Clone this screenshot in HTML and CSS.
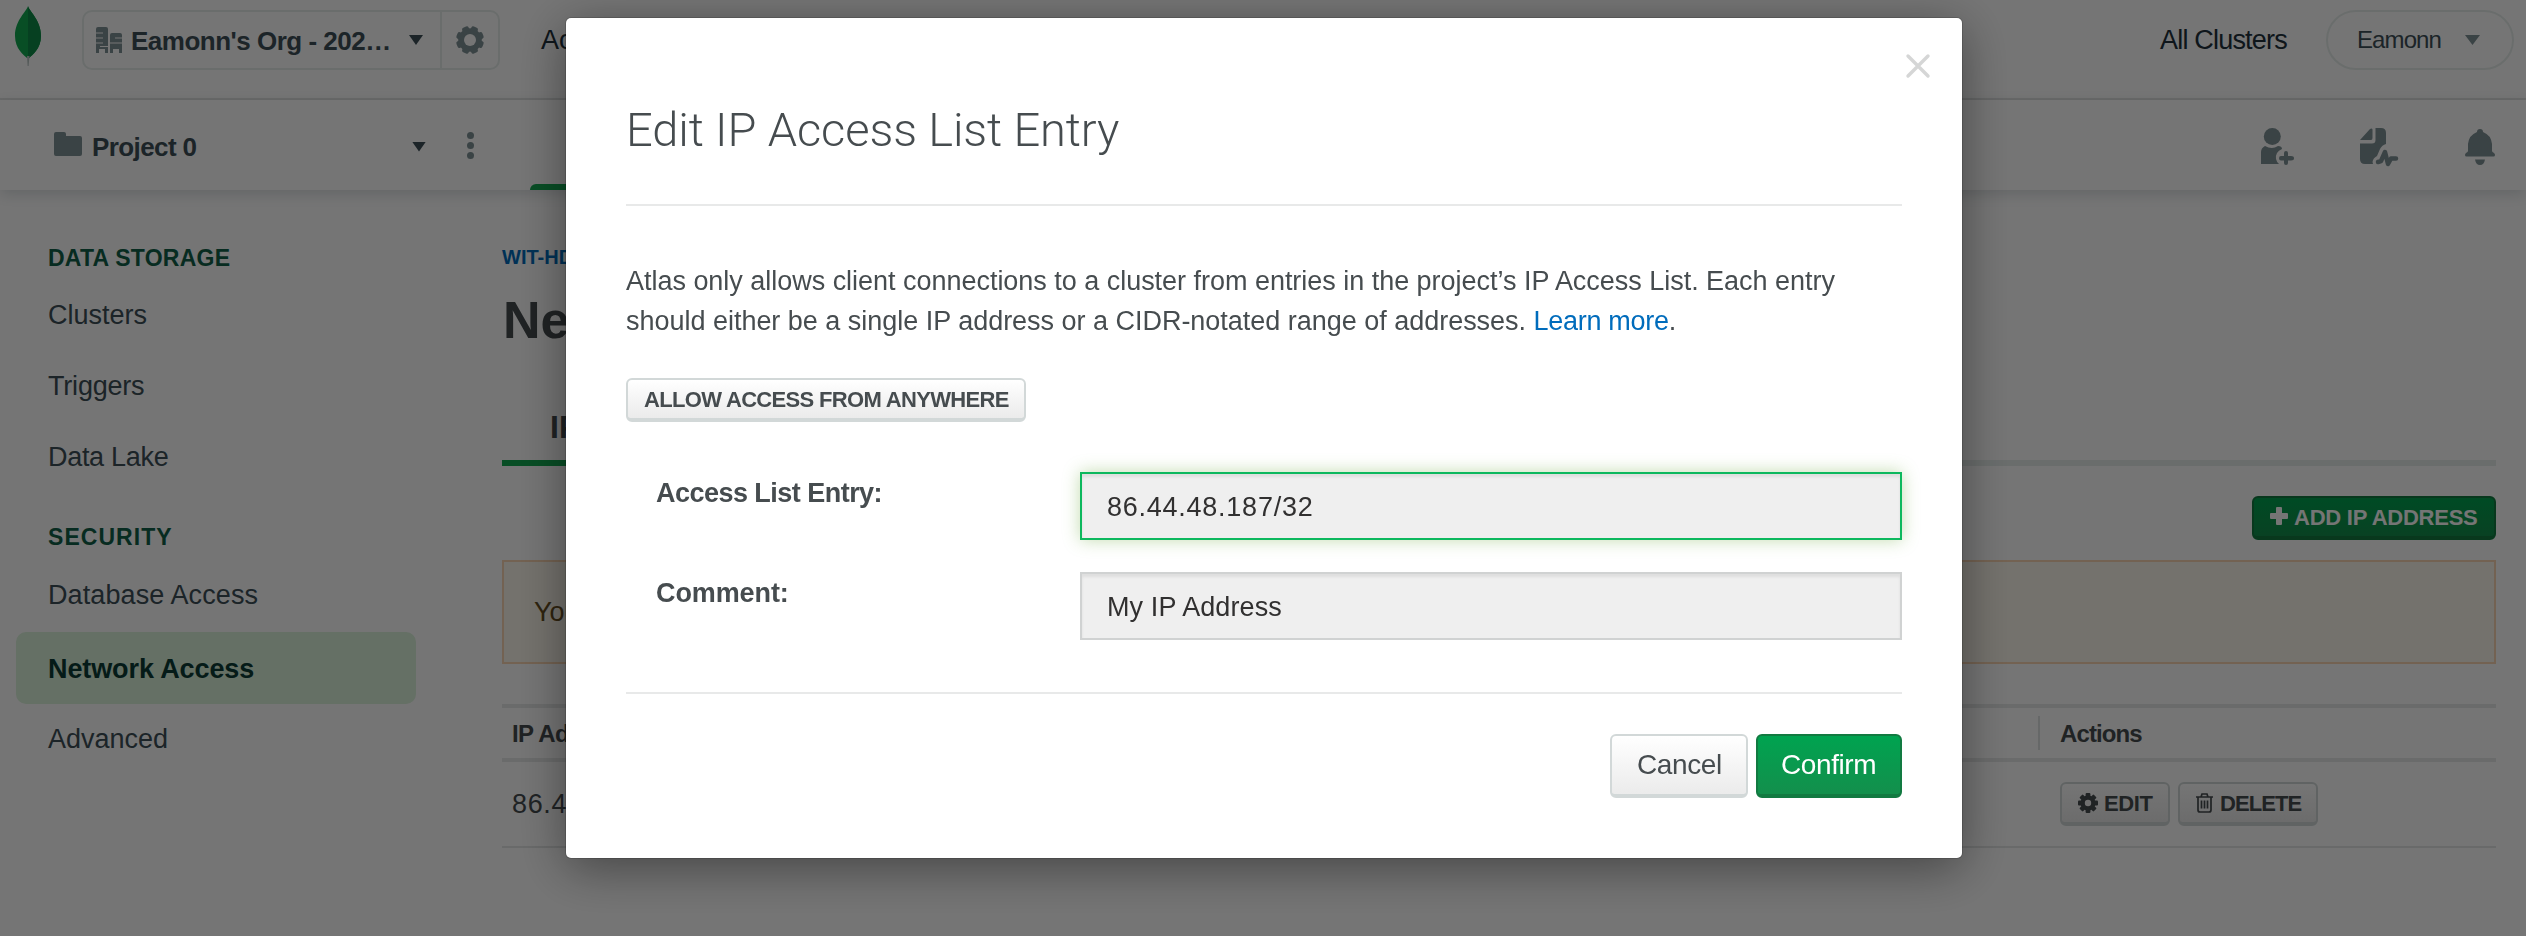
FILE: index.html
```html
<!DOCTYPE html>
<html lang="en">
<head>
<meta charset="utf-8">
<title>Network Access</title>
<link rel="stylesheet" href="styles.css">
</head>
<body>
<div class="page">
  <header class="topbar">
    <svg class="leaf" viewBox="0 0 26 60"><path fill="#13aa52" d="M13 0C14 5 26 14 26 30C26 43 17 49 14 52H12C9 49 0 43 0 30C0 14 12 5 13 0Z"/><path fill="#0f8c48" d="M13 0C14 5 26 14 26 30C26 43 17 49 14 52H13Z"/><path fill="#b8c4c2" d="M12 50H14.5L13.6 60H12.6Z"/></svg>
    <div class="org">
      <div class="org-name">
        <svg class="org-icon" viewBox="0 0 26 26"><path fill="#7f9296" d="M2 0H10Q12 0 12 2V26H9V22H3V26H0V2Q0 0 2 0ZM16 6H24Q26 6 26 8V26H23V22H17V26H14V8Q14 6 16 6Z"/><path stroke="#fff" stroke-width="1.1" d="M0 6H7M0 11H7M0 16H7M19 11H26M14 16H21M19 16H26M4 19.500H12"/></svg>
        <span class="org-text">Eamonn's Org - 202…</span>
        <i class="caret"></i>
      </div>
      <div class="org-gear">
        <svg viewBox="-14 -14 28 28"><g fill="#7f9296"><circle r="11.8"/><g id="teeth"><rect x="-3.500" y="-14" width="7" height="28" rx="2" transform="rotate(22.500)"/><rect x="-14" y="-3.500" width="28" height="7" rx="2" transform="rotate(22.500)"/></g><use href="#teeth" transform="rotate(45)"/></g><circle r="6" fill="#fff"/></svg>
      </div>
    </div>
    <span class="nav-link nav-access">Access</span>
    <span class="nav-link nav-clusters">All Clusters</span>
    <div class="user"><span>Eamonn</span><i class="caret caret-user"></i></div>
  </header>
  <div class="subbar">
    <svg class="folder" viewBox="0 0 28 24"><path fill="#7f9296" d="M2 0H10Q12 0 12 2V4H26Q28 4 28 6V22Q28 24 26 24H2Q0 24 0 22V2Q0 0 2 0Z"/></svg>
    <span class="project">Project 0</span>
    <i class="caret caret-project"></i>
    <div class="dots"><i></i><i></i><i></i></div>
    <div class="tab-active"></div>
    <div class="tools">
      <svg class="t-person" viewBox="0 0 33 37"><g fill="#7f9296"><ellipse cx="11.3" cy="8.5" rx="8.5" ry="8.5"/><path d="M4 18Q11 22 17 18Q21 18 21 21Q14 24 15 31Q16 35 18 36H0V24Q0 20 4 18Z"/><path d="M25 23Q27 23 27 25V28H30Q33 28 33 30.300Q33 32.500 30 32.500H27V35Q27 37 25 37Q23 37 23 35V32.500H20Q18 32.500 18 30.300Q18 28 20 28H23V25Q23 23 25 23Z"/></g></svg>
      <svg class="t-doc" viewBox="0 0 38 38"><g fill="#7f9296"><path d="M0 12L10 1Q12 0 12.500 1.500V10Q12.500 12 11 12ZM15.500 0H21Q26 0 26 5V16Q22 17 20 21L17 28Q13 30 12.500 34L13 36H5Q0 36 0 31V15.500H12Q15.500 15.500 15.500 12Z"/></g><path d="M18 34L21 33L25 24L28 36L31 30.500H36" fill="none" stroke="#7f9296" stroke-width="4.500" stroke-linejoin="round" stroke-linecap="round"/></svg>
      <svg class="t-bell" viewBox="0 0 30 36"><path fill="#7f9296" d="M15 0Q18 0 18 3Q26 6 27 15V22Q27 23 29 24Q30 25 30 26Q30 27.500 28.500 27.500H1.500Q0 27.500 0 26Q0 25 1 24Q3 23 3 22V15Q4 6 12 3Q12 0 15 0ZM10 30.500H20Q19 36 15 36Q11 36 10 30.500Z"/></svg>
    </div>
  </div>
  <div class="body">
    <nav class="sidebar">
      <div class="side-head">DATA STORAGE</div>
      <div class="side-item">Clusters</div>
      <div class="side-item side-triggers">Triggers</div>
      <div class="side-item side-lake">Data Lake</div>
      <div class="side-head side-head-2">SECURITY</div>
      <div class="side-item side-db">Database Access</div>
      <div class="side-item side-active">Network Access</div>
      <div class="side-item side-adv">Advanced</div>
    </nav>
    <main class="main">
      <div class="crumb">WIT-HDIP</div>
      <h1 class="heading">Net</h1>
      <div class="tabs"><div class="tab">IP</div></div>
      <div class="actions-row">
        <div class="btn btn-green btn-add"><svg class="plus" viewBox="0 0 18 18"><path fill="#fff" d="M7 0H11Q12 0 12 1V6H17Q18 6 18 7V11Q18 12 17 12H12V17Q12 18 11 18H7Q6 18 6 17V12H1Q0 12 0 11V7Q0 6 1 6H6V1Q6 0 7 0Z"/></svg><span>ADD IP ADDRESS</span></div>
      </div>
      <div class="warning">You</div>
      <div class="table">
        <div class="row row-head"><div class="cell-ip">IP Address</div><div class="cell-actions">Actions</div></div>
        <div class="row row-entry">
          <div class="cell-ip">86.44.48.187/32</div>
          <div class="cell-buttons">
            <div class="btn btn-edit"><svg class="cog" viewBox="-10 -10 20 20"><g fill="#464c4f"><circle r="7.500"/><g id="cogteeth"><rect x="-2.400" y="-10" width="4.800" height="20" rx="1"/><rect x="-10" y="-2.400" width="20" height="4.800" rx="1"/></g><use href="#cogteeth" transform="rotate(45)"/></g><circle r="3.200" fill="#f5f5f5"/></svg><span>EDIT</span></div>
            <div class="btn btn-delete"><svg class="trash" viewBox="0 0 17 20"><path fill="none" stroke="#464c4f" stroke-width="1.700" d="M0 4H17M5 4L6 1H11L12 4M2 4V17Q2 19 4 19H13Q15 19 15 17V4M5.500 7.500V15.500M8.500 7.500V15.500M11.500 7.500V15.500"/></svg><span>DELETE</span></div>
          </div>
        </div>
      </div>
    </main>
  </div>
</div>
<div class="overlay">
  <div class="modal">
    <svg class="close" viewBox="0 0 24 24"><path d="M2 2L22 22M22 2L2 22" stroke="#d5d6d6" stroke-width="3.400" stroke-linecap="round"/></svg>
    <h2 class="title">Edit IP Access List Entry</h2>
    <div class="content">
      <p class="desc"><span class="line line-1">Atlas only allows client connections to a cluster from entries in the project’s IP Access List. Each entry</span><span class="line line-2">should either be a single IP address or a CIDR-notated range of addresses. <a class="learn">Learn more</a>.</span></p>
      <div class="btn btn-anywhere"><span>ALLOW ACCESS FROM ANYWHERE</span></div>
      <div class="field"><label class="label-1">Access List Entry:</label><div class="input input-focus"><span class="v1">86.44.48.187/32</span></div></div>
      <div class="field"><label class="label-2">Comment:</label><div class="input"><span class="v2">My IP Address</span></div></div>
    </div>
    <div class="footer">
      <div class="btn btn-lg btn-cancel"><span>Cancel</span></div>
      <div class="btn btn-lg btn-green btn-confirm"><span>Confirm</span></div>
    </div>
  </div>
</div>
</body>
</html>
```
FILE: styles.css
```css
* { box-sizing: border-box; }
body { margin: 0; width: 2526px; height: 936px; overflow: hidden; background: #fff; font-family: "Liberation Sans", Arial, sans-serif; color: #464c4f; }
svg { display: block; flex: none; overflow: visible; }
span { white-space: nowrap; }
.page { width: 2526px; height: 936px; background: #fff; }

.topbar { display: flex; align-items: flex-start; height: 100px; border-bottom: 2px solid #e4e5e5; padding: 10px 12px 0 15px; }
.leaf { width: 26px; height: 60px; margin: -4px 41px 0 0; }
.org { display: flex; width: 418px; height: 60px; border: 2px solid #e7eeec; border-radius: 10px; }
.org-name { display: flex; align-items: center; width: 358px; padding-left: 12px; }
.org-icon { width: 26px; height: 26px; margin-right: 9px; }
.org-text { width: 278px; padding-top: 2px; font-size: 26px; font-weight: bold; color: #3d4f58; letter-spacing: -0.5px; }
.caret { display: block; flex: none; width: 14px; height: 10px; background: #3d4f58; clip-path: polygon(0 0, 100% 0, 50% 100%); }
.org-gear { display: flex; align-items: center; justify-content: center; width: 58px; border-left: 2px solid #e7eeec; }
.org-gear svg { width: 28px; height: 28px; }
.nav-link { font-size: 27px; line-height: 60px; color: #21313c; }
.nav-access { margin-left: 41px; width: 400px; }
.nav-clusters { margin-left: auto; width: 166px; letter-spacing: -0.8px; }
.user { display: flex; align-items: center; width: 188px; height: 60px; border: 2px solid #e7eeec; border-radius: 30px; padding-left: 29px; font-size: 24px; color: #3d4f58; }
.user span { width: 108px; letter-spacing: -0.9px; }
.caret-user { width: 15px; background: #7f9296; }

.subbar { display: flex; align-items: center; position: relative; height: 90px; padding: 0 31px 0 54px; box-shadow: 0 4px 14px rgba(61, 79, 88, 0.2); }
.folder { width: 28px; height: 24px; margin-right: 10px; margin-top: -2px; }
.project { width: 320px; font-size: 26px; font-weight: bold; letter-spacing: -0.6px; color: #3d4f58; margin-top: 5px; }
.caret-project { margin-top: 3px; }
.dots { display: flex; flex-direction: column; gap: 3px; margin-left: 41px; }
.dots i { width: 7px; height: 7px; border-radius: 50%; background: #7f9296; }
.tab-active { align-self: flex-end; width: 200px; height: 6px; margin-left: 56px; background: #13aa52; border-radius: 6px 6px 0 0; }
.tools { display: flex; align-items: center; margin-left: auto; margin-top: 3px; }
.t-person { width: 33px; height: 37px; margin-right: 66px; }
.t-doc { width: 38px; height: 38px; margin-right: 67px; }
.t-bell { width: 30px; height: 36px; }

.body { display: flex; }
.sidebar { width: 502px; padding: 48px 0 0 16px; }
.side-head { height: 41px; line-height: 41px; padding-left: 32px; font-size: 23px; font-weight: bold; letter-spacing: 0.25px; color: #116149; }
.side-head-2 { margin-top: 25px; letter-spacing: 1.05px; }
.side-item { width: 400px; height: 71px; line-height: 73px; padding-left: 32px; font-size: 27px; color: #3d4f58; }
.side-triggers { letter-spacing: -0.2px; }
.side-lake { letter-spacing: -0.3px; }
.side-db { margin: 1px 0 2px; letter-spacing: 0.1px; }
.side-active { height: 72px; line-height: 75px; background: #dcf3dc; border-radius: 10px; font-weight: bold; letter-spacing: -0.1px; color: #0b3b35; }
.side-adv { height: 70px; line-height: 70px; }

.main { width: 1994px; padding-top: 50px; }
.crumb { height: 34px; line-height: 34px; font-size: 20px; font-weight: bold; color: #006cbc; }
.heading { margin: 15px 0 0; height: 62px; line-height: 62px; font-size: 52px; padding-left: 1px; color: #464c4f; }
.tabs { height: 115px; border-bottom: 6px solid #e7eeec; padding-top: 47px; }
.tab { width: 260px; height: 68px; line-height: 58px; font-size: 32px; padding-left: 48px; border-bottom: 6px solid #13aa52; font-weight: bold; }
.actions-row { display: flex; justify-content: flex-end; padding-top: 30px; height: 94px; }

.btn { display: flex; align-items: center; height: 44px; border: 2px solid #d2d8d8; border-bottom-width: 4px; border-radius: 6px; background: linear-gradient(#fff, #ebebeb); font-size: 22px; font-weight: bold; color: #464c4f; }
.btn span { padding-top: 2px; }
.btn-green { background: linear-gradient(#00a350, #138f4c); border-color: #127a41; color: #fff; }
.btn-add { width: 244px; padding-left: 16px; letter-spacing: -0.25px; }
.plus { width: 18px; height: 18px; margin: -3px 6px 0 0; }
.warning { height: 104px; border: 2px solid #fad5b2; background: #fcf8ed; padding-left: 30px; line-height: 100px; font-size: 27px; color: #664e22; }
.table { margin-top: 40px; border-top: 4px solid #e7e9e9; }
.row { display: flex; align-items: center; justify-content: space-between; padding-left: 10px; }
.row-head { height: 54px; border-bottom: 4px solid #e7e9e9; font-size: 24px; font-weight: bold; letter-spacing: -0.6px; }
.row-head .cell-ip { padding-top: 2px; }
.cell-actions { width: 458px; height: 34px; line-height: 36px; border-left: 2px solid #dfe3e2; padding-left: 20px; letter-spacing: -0.9px; }
.row-entry { height: 86px; border-bottom: 2px solid #e4e6e6; font-size: 27px; }
.row-entry .cell-ip { letter-spacing: 0.65px; }
.cell-buttons { display: flex; gap: 8px; width: 436px; }
.btn-edit { width: 110px; padding-left: 16px; letter-spacing: -0.4px; }
.cog { width: 20px; height: 20px; margin-right: 6px; }
.btn-delete { width: 140px; padding-left: 16px; letter-spacing: -0.9px; }
.trash { width: 17px; height: 20px; margin-right: 7px; }

.overlay { position: fixed; inset: 0; display: flex; justify-content: flex-start; padding: 18px 0 0 566px; background: rgba(0, 0, 0, 0.54); }
.modal { position: relative; width: 1396px; height: 840px; padding: 0 60px; border-radius: 5px; background: #fff; box-shadow: 0 0 0 1px rgba(0, 0, 0, 0.15), 0 10px 50px rgba(0, 0, 0, 0.42); }
.close { position: absolute; left: 1340px; top: 36px; width: 24px; height: 24px; }
.title { margin: 0; height: 188px; padding-top: 82px; line-height: 60px; border-bottom: 2px solid #e8e9e9; font-family: Roboto, "Liberation Sans", sans-serif; font-weight: 300; font-size: 47px; letter-spacing: -0.1px; }
.content { width: 1276px; height: 486px; padding-top: 55px; }
.desc { margin: 0; font-size: 27px; line-height: 40px; }
.line { display: block; }
.line-1 { letter-spacing: -0.025px; }
.line-2 { letter-spacing: -0.02px; }
.learn { color: #006cbc; letter-spacing: -0.3px; }
.btn-anywhere { width: 400px; margin: 37px 0 50px; padding-left: 16px; letter-spacing: -0.67px; }
.field { display: flex; justify-content: space-between; height: 100px; padding-left: 30px; }
.field label { font-size: 27px; font-weight: bold; line-height: 42px; }
.label-1 { letter-spacing: -0.53px; }
.label-2 { letter-spacing: -0.1px; }
.input { display: flex; align-items: center; width: 822px; height: 68px; padding-left: 25px; border: 2px solid #d0d2d2; background: #efefef; box-shadow: inset 0 3px 3px rgba(0, 0, 0, 0.07); font-size: 27px; color: #313030; }
.input span { padding-top: 2px; }
.v1 { letter-spacing: 0.75px; }
.v2 { letter-spacing: 0.1px; }
.input-focus { border-color: #0db85e; box-shadow: inset 0 3px 3px rgba(0, 0, 0, 0.07), 0 0 16px rgba(104, 168, 57, 0.4); }
.footer { display: flex; justify-content: flex-end; gap: 8px; width: 1276px; padding-top: 40px; border-top: 2px solid #e8e9e9; }
.btn-lg { height: 64px; font-size: 28px; font-weight: normal; }
.btn-lg span { padding-top: 0; }
.btn-cancel { width: 138px; padding-left: 25px; letter-spacing: -0.4px; }
.btn-confirm { width: 146px; padding-left: 23px; letter-spacing: -0.4px; }
```
